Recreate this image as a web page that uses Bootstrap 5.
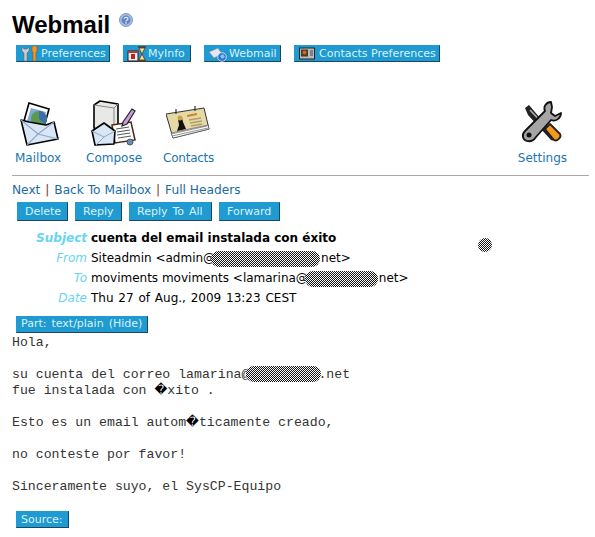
<!DOCTYPE html>
<html lang="es">
  <head>
    <meta charset="UTF-8" />
    <title>Webmail</title>
    <link href="https://cdn.jsdelivr.net/npm/bootstrap@5.3.3/dist/css/bootstrap.min.css" rel="stylesheet" />
    <style>
      body {
        font-family: "DejaVu Sans", sans-serif;
        font-size: 12px;
        color: #000;
        background: #fff;
        position: relative;
      }
      .page-wrap { padding: 11px 6px 0 12px; height: 537px; overflow: hidden; }
      .page-title {
        font-family: "Liberation Sans", sans-serif;
        font-weight: 700;
        font-size: 24px;
        line-height: 28px;
        margin: 0;
      }
      .help-icon { margin: 2px 0 0 1px; }
      .top-bar { margin: 6px 0 0 4px; gap: 13px; }
      .blue-btn {
        display: inline-flex;
        align-items: center;
        height: 17px;
        padding: 0 3px;
        background: #1f9bd1;
        color: #d8f1fb;
        font-size: 11px;
        line-height: 16px;
        border: 1px solid #1f9bd1;
        border-right-color: #1d4560;
        border-bottom-color: #1d4560;
        text-decoration: none;
        white-space: nowrap;
      }
      .blue-btn svg { margin-right: 1px; }
      .w-pref { width: 94px; }
      .w-info { width: 68px; }
      .w-mail { width: 77px; }
      .w-cont { width: 146px; }
      .icon-row { margin-top: 38px; padding-left: 3px; height: 67px; }
      .icon-cell {
        display: flex;
        flex-direction: column;
        align-items: center;
        color: #1b75b3;
        font-size: 12px;
        text-decoration: none;
        line-height: 14px;
      }
      .icon-cell svg { display: block; margin-bottom: 5px; }
      .compose-cell { margin-left: 25px; }
      .contacts-cell { margin-left: 21px; letter-spacing: -.25px; }
      .settings-cell { margin-left: auto; margin-right: 22px; }
      .rule-line { border-top: 1px solid #aaa; margin: 8px 0 0; width: 577px; }
      .msg-links { margin-top: 7px; line-height: 15px; color: #7a3b1d; font-size: 12.2px; }
      .msg-links a { color: #1b6c9e; text-decoration: none; }
      .link-sep { margin: 0 1px; }
      .action-bar { margin: 4px 0 0 5px; gap: 7px; }
      .action-bar .blue-btn { height: 19px; padding: 0 0 0 7px; word-spacing: 1.5px; }
      .action-bar .w-del { width: 51px; }
      .action-bar .w-rep { width: 47px; }
      .action-bar .w-all { width: 83px; }
      .action-bar .w-fwd { width: 61px; }
      .head-table { margin-top: 7px; }
      .head-line { display: flex; height: 20px; align-items: center; font-size: 12px; white-space: nowrap; }
      .head-key { width: 75px; text-align: right; margin-right: 4px; font-style: italic; color: #66d5f5; }
      .head-subject .head-key { font-weight: 700; color: #66d5f5; }
      .head-subject .head-val { font-weight: 700; }
      .head-date .head-val { word-spacing: 1px; }
      .scribble {
        display: inline-block;
        vertical-align: middle;
        height: 16px;
        border-radius: 8px;
        background: repeating-conic-gradient(#111 0 25%, #fff 0 50%) 0 0 / 2px 2px;
      }
      .scrib-from { width: 109px; margin: 0 1px 0 -4px; }
      .scrib-to { width: 73px; margin: 0 1px 0 -3px; }
      .scrib-body { width: 75px; height: 16px; margin: -4px -3px -3px -3px; }
      .scrib-dot { position: absolute; left: 478px; top: 238px; width: 14px; height: 14px; }
      .part-btn { margin: 6px 0 0 4px; }
      .part-btn .blue-btn { padding: 0 5px 0 4px; word-spacing: 1.5px; }
      .mail-body {
        font-family: "Liberation Mono", monospace;
        font-size: 13.2px;
        line-height: 16px;
        color: #333;
        margin: 2px 0 0;
      }
      .mail-body p { margin: 0 0 16px; white-space: pre; }
      .mail-body p:last-child { margin-bottom: 0; }
      .mail-line { display: block; }
      .bad-char { font-family: "DejaVu Sans", sans-serif; font-size: 12.5px; line-height: 0; color: #000; }
      .source-btn { margin: 15px 0 0 4px; }
      .source-btn .blue-btn { padding: 0 5px 0 4px; }
    </style>
  </head>
  <body>
    <div class="page-wrap">
      <div class="d-flex align-items-start gap-2">
        <h1 class="page-title">Webmail</h1>
        <svg class="help-icon" width="14" height="14" viewBox="0 0 14 14">
          <circle cx="7" cy="7" r="6.5" fill="#a8bcdc" stroke="#7f9ac6" />
          <circle cx="7" cy="7" r="4.4" fill="#5f86c2" />
          <path d="M5 5.6c.3-1.6 4-1.600 4 .2 0 1.200-2 1.200-2 2.600" fill="none" stroke="#dfe8f5" stroke-width="1.3" />
          <rect x="6.3" y="9.300" width="1.4" height="1.4" fill="#dfe8f5" />
        </svg>
      </div>

      <div class="d-flex top-bar">
        <a class="blue-btn w-pref" href="#">
          <svg width="20" height="16" viewBox="0 0 20 16"><path d="M2 1v4l2 2v8h3V7l2-2V1L7 3H4z" fill="#ccc" stroke="#667" stroke-width=".6" /><path d="M12 0h5v6h-1v9h-3V6h-1z" fill="#f0962c" stroke="#8a5a20" stroke-width=".6" /></svg>
          Preferences
        </a>
        <a class="blue-btn w-info" href="#">
          <svg width="20" height="16" viewBox="0 0 20 16"><rect x="1" y="5" width="10" height="10" fill="#eee" stroke="#222" /><rect x="1" y="5" width="10" height="2" fill="#c33" /><rect x="4" y="8" width="4" height="5" fill="#b22" /><path d="M11 1h8M11 15h8" stroke="#5a3512" stroke-width="1.6" /><path d="M12 2l3 6-3 6h6l-3-6 3-6z" fill="#f3e3a0" stroke="#5a3512" stroke-width=".8" /></svg>
          MyInfo
        </a>
        <a class="blue-btn w-mail" href="#">
          <svg width="20" height="16" viewBox="0 0 20 16"><path d="M1 6l9-4 4 6-8 4z" fill="#e4e8ee" stroke="#889" stroke-width=".7" /><circle cx="14" cy="11" r="4.300" fill="#2f6fd0" stroke="#dfe8f5" stroke-width=".8" /><path d="M12 10l3-2 2 3-3 2z" fill="#7fc8f0" /></svg>
          Webmail
        </a>
        <a class="blue-btn w-cont" href="#">
          <svg width="20" height="13" viewBox="0 0 20 13"><rect x="1.500" y="1" width="15" height="11" fill="#bbb" stroke="#222" /><rect x="3" y="2.500" width="7" height="7" fill="#4a3a30" /><circle cx="6.500" cy="5.500" r="2" fill="#d5641c" /><path d="M12 4h3M12 6h3M12 8h3" stroke="#444" /></svg>
          Contacts Preferences
        </a>
      </div>

      <div class="d-flex icon-row">
        <a class="icon-cell" href="#">
          <svg width="46" height="46" viewBox="0 0 46 46">
            <path d="M14 3l20 6-5 18-20-6z" fill="#fff" stroke="#000" stroke-width="1.6" />
            <path d="M16 8l15 4-4 13-15-4z" fill="#7fa8d8" />
            <circle cx="24" cy="19" r="8" fill="#5a9a4a" />
            <path d="M24 11a8 8 0 0 1 6 13l-6-5z" fill="#3e6cb0" />
            <path d="M6 20l8 2 17 3 8-3 4 17-31 6z" fill="#d8e6f5" stroke="#000" stroke-width="1.6" stroke-linejoin="round" />
            <path d="M6 20l17 14 20 5M12 45l11-11M39 22l-16 12" fill="none" stroke="#8fa8c8" stroke-width="1.1" />
          </svg>
          Mailbox
        </a>
        <a class="icon-cell compose-cell" href="#">
          <svg width="46" height="46" viewBox="0 0 46 46">
            <path d="M3 5l6-4 18 3v26l-17 2L3 28z" fill="#e8e8e6" stroke="#000" stroke-width="1.6" stroke-linejoin="round" />
            <path d="M3 5l20 3 4-4M23 8v23" fill="none" stroke="#888" stroke-width="1" />
            <path d="M21 25l19-3 4 18-20 3z" fill="#fff" stroke="#4a2a14" stroke-width="1.5" />
            <path d="M25 29l13-2M26 32l13-2M26 35l13-2M27 38l13-2" stroke="#555" stroke-width="1" />
            <path d="M32 22l9-13 3 2-8 13-5 2z" fill="#c89ae0" stroke="#222" stroke-width="1.2" />
            <path d="M1 31l12-8 11 8-1 13-19 1z" fill="#d8e6f5" stroke="#000" stroke-width="1.6" stroke-linejoin="round" />
            <path d="M1 31l12 6 11-6M5 45l8-8" fill="none" stroke="#8fa8c8" />
            <circle cx="39" cy="42" r="3" fill="#6b8fb5" stroke="#333" stroke-width=".7" />
          </svg>
          Compose
        </a>
        <a class="icon-cell contacts-cell" href="#">
          <svg width="46" height="46" viewBox="0 0 46 46">
            <path d="M0 14L38 8l5 21-36 9z" fill="#e6d9a6" stroke="#333" stroke-width="1" stroke-linejoin="round" />
            <path d="M5 33l37-8 1 4-36 9z" fill="#fff" stroke="#444" stroke-width=".6" />
            <path d="M5 34l36-8M6 36l36-8" stroke="#666" stroke-width=".7" />
            <path d="M12 19l4-1 1 4 3 7-9 2 2-6z" fill="#111" />
            <circle cx="14" cy="18" r="2.500" fill="#c9a24a" />
            <path d="M21 16l10-2" stroke="#c8862a" stroke-width="2" />
            <path d="M23 20l12-2M24 23l12-2M25 26l11-2" stroke="#b0a070" stroke-width="1.400" />
            <path d="M10 9v5M29 6v5" stroke="#333" stroke-width="1.200" />
          </svg>
          Contacts
        </a>
        <a class="icon-cell settings-cell" href="#">
          <svg width="46" height="46" viewBox="0 0 46 46">
            <path d="M6 8l4-3 5 6 14 16 8 7c3 3-2 8-5 6L21 28 9 15z" fill="#222" />
            <path d="M11 10l16 17" stroke="#aaa" stroke-width="1.800" />
            <path d="M32 2c-5 0-8 5-6 9L6 31c-4 4-2 9 2 10s7-1 9-4l15-17c5 2 10-2 10-7l-6 3-4-3 1-6z" fill="#a5a5a5" stroke="#111" stroke-width="1.8" stroke-linejoin="round" />
            <circle cx="10" cy="35" r="2.500" fill="#111" />
            <path d="M26 29l5-5 10 10c2 3-3 8-6 6z" fill="#f39a1e" stroke="#222" stroke-width="1.800" stroke-linejoin="round" />
          </svg>
          Settings
        </a>
      </div>

      <div class="rule-line"></div>

      <div class="msg-links"><a href="#">Next</a> <span class="link-sep">|</span> <a href="#">Back To Mailbox</a> <span class="link-sep">|</span> <a href="#">Full Headers</a></div>

      <div class="d-flex action-bar">
        <a class="blue-btn w-del" href="#">Delete</a>
        <a class="blue-btn w-rep" href="#">Reply</a>
        <a class="blue-btn w-all" href="#">Reply To All</a>
        <a class="blue-btn w-fwd" href="#">Forward</a>
      </div>

      <div class="head-table">
        <div class="head-line head-subject"><span class="head-key">Subject</span><span class="head-val">cuenta del email instalada con éxito</span></div>
        <div class="head-line"><span class="head-key">From</span><span class="head-val">Siteadmin &lt;admin@<span class="scribble scrib-from"></span>net&gt;</span></div>
        <div class="head-line"><span class="head-key">To</span><span class="head-val">moviments moviments &lt;lamarina@<span class="scribble scrib-to"></span>net&gt;</span></div>
        <div class="head-line head-date"><span class="head-key">Date</span><span class="head-val">Thu 27 of Aug., 2009 13:23 CEST</span></div>
      </div>

      <div class="part-btn"><a class="blue-btn" href="#">Part: text/plain (Hide)</a></div>
      <div class="mail-body">
        <p>Hola,</p>
        <p><span class="mail-line">su cuenta del correo lamarina@<span class="scribble scrib-body"></span>.net</span><span class="mail-line">fue instalada con <span class="bad-char">�</span>xito .</span></p>
        <p>Esto es un email autom<span class="bad-char">�</span>ticamente creado,</p>
        <p>no conteste por favor!</p>
        <p>Sinceramente suyo, el SysCP-Equipo</p>
      </div>
      <div class="source-btn"><a class="blue-btn" href="#">Source:</a></div>
    </div>
    <span class="scribble scrib-dot"></span>
    <script src="https://cdn.jsdelivr.net/npm/bootstrap@5.3.3/dist/js/bootstrap.bundle.min.js"></script>
  </body>
</html>
